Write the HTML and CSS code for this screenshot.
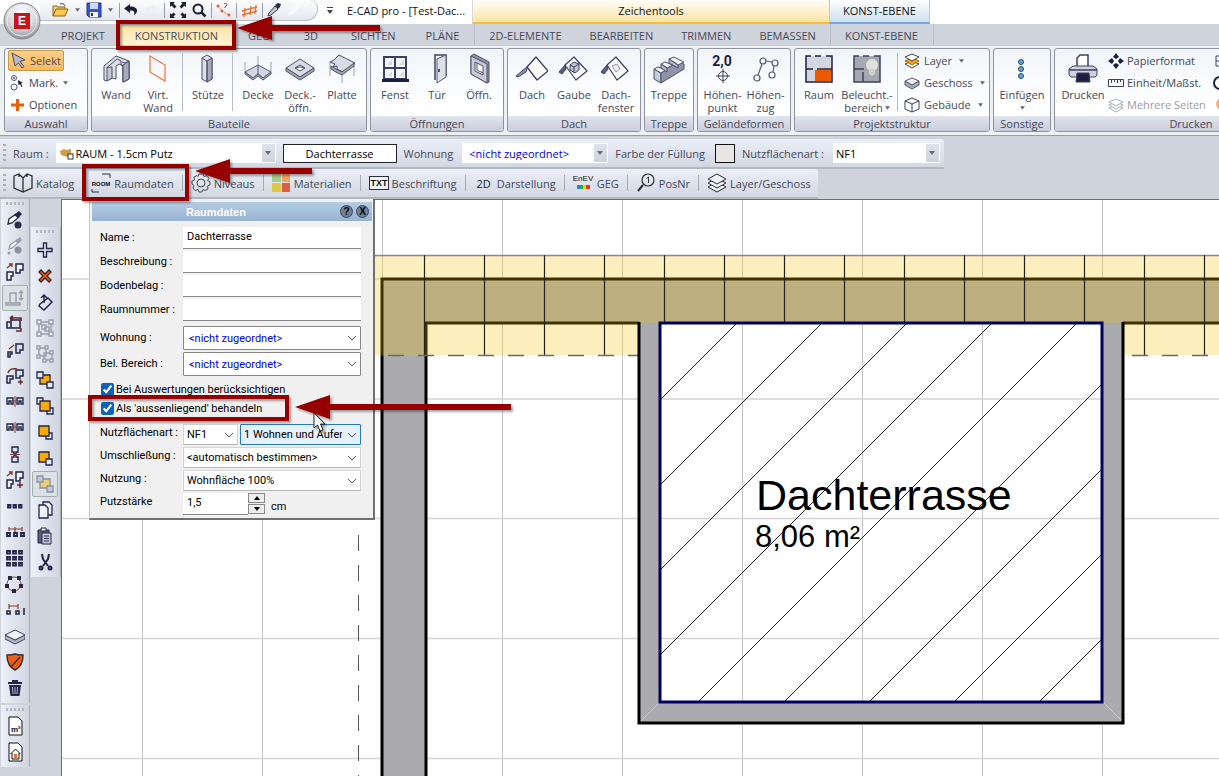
FILE: index.html
```html
<!DOCTYPE html>
<html lang="de">
<head>
<meta charset="utf-8">
<title>E-CAD pro</title>
<link rel="stylesheet" href="styles.css">
</head>
<body>
<svg class="defs" aria-hidden="true">
  <defs>
    <radialGradient id="orb" cx=".5" cy=".3" r=".7"><stop offset="0" stop-color="#fff"/><stop offset=".6" stop-color="#d4d6da"/><stop offset="1" stop-color="#8d9096"/></radialGradient>
    <symbol id="chev" viewBox="0 0 10 6"><path d="M1 1l4 4 4-4" fill="none" stroke="#555"/></symbol>
    <symbol id="tri" viewBox="0 0 6 4"><path d="M0 0h6L3 4z" fill="#666a75"/></symbol>
    <symbol id="pair" viewBox="0 0 20 20"><path d="M2 10h6v4H6v4H2zM11 2h7v6h-3v3h-4z" fill="#f2f4fa" stroke="#23264a" stroke-width="1.5"/><path d="M2 6l5-4M4 2h3v3" stroke="#8a3a2a" fill="none" stroke-width="1.3"/></symbol>
    <symbol id="mirror" viewBox="0 0 20 20"><path d="M2 6h6v6H6v-3H4v3H2zM12 6h6v6h-2v-3h-2v3h-2z" fill="none" stroke="#23264a" stroke-width="1.4"/><path d="M10 4v11M8 9h4" stroke="#8a3a2a"/></symbol>
  </defs>
</svg>

<header class="titlebar">
  <button class="orb" aria-label="Anwendungsmenü">
    <svg width="42" height="42" viewBox="0 0 42 42"><circle cx="21" cy="21" r="18" fill="url(#orb)" stroke="#83868c"/><circle cx="21" cy="21" r="15" fill="none" stroke="#fff" opacity=".7"/><rect x="13" y="13" width="16" height="16" fill="#c4161c"/><text x="21" y="25" class="orb-e" text-anchor="middle">E</text></svg>
  </button>
  <div class="quick">
    <button aria-label="Öffnen"><svg width="18" height="16" viewBox="0 0 18 16"><path d="M2 14V4h4l1 1h7v2" fill="#f6d27a" stroke="#8a6414"/><path d="M2 14l3-7h12l-3 7z" fill="#fbc94e" stroke="#8a6414"/><path d="M9 2c3-1 4 0 5 2" stroke="#444" fill="none"/></svg></button>
    <button class="mini" aria-label="Mehr"><svg width="5" height="4"><use href="#tri"/></svg></button>
    <button aria-label="Speichern"><svg width="16" height="16" viewBox="0 0 16 16"><path d="M1 1h14v14H3l-2-2z" fill="#3a55c8" stroke="#23357e"/><rect x="4" y="1" width="8" height="6" fill="#cdd9fb"/><rect x="4" y="10" width="8" height="5" fill="#fff"/><rect x="5" y="11" width="2" height="3" fill="#23357e"/></svg></button>
    <button class="mini" aria-label="Mehr"><svg width="5" height="4"><use href="#tri"/></svg></button>
    <i class="qsep"></i>
    <button aria-label="Rückgängig"><svg width="14" height="14" viewBox="0 0 14 14"><path d="M6 1L0 5.500l6 4.500V7.500c4 0 5 1 4 5 5-4 4-9-4-9z" fill="#1c2036"/></svg></button>
    <button class="gap" aria-label="Wiederholen"><svg width="14" height="14" viewBox="0 0 14 14"><path d="M8 1l5 4-5 4V6.500C4 6.500 3 8 4 12 0 8 1 3.500 8 3.500z" fill="#eceef2"/></svg></button>
    <i class="qsep"></i>
    <button aria-label="Vollbild"><svg width="18" height="16" viewBox="0 0 18 16"><path d="M1 5V0h5L4.500 1.500l3 3-2 2-3-3zM17 5V0h-5l1.500 1.500-3 3 2 2 3-3zM1 11v5h5l-1.500-1.500 2-2-2-2-2 2zM17 11v5h-5l1.500-1.500-2-2 2-2 2 2z" fill="#1c2036"/></svg></button>
    <button aria-label="Zoom"><svg width="16" height="16" viewBox="0 0 16 16"><circle cx="7" cy="7" r="4.500" fill="none" stroke="#1c2036" stroke-width="2"/><path d="M10 10l4.500 4.500" stroke="#1c2036" stroke-width="2.500"/></svg></button>
    <i class="qsep"></i>
    <button aria-label="Messen"><svg width="16" height="16" viewBox="0 0 16 16"><path d="M2 4l4 5 7 4" fill="none" stroke="#e8712a" stroke-dasharray="2 1"/><circle cx="2" cy="4" r="1.500" fill="#e8611a"/><circle cx="6" cy="9" r="1.500" fill="#e8611a"/><circle cx="13" cy="13" r="1.500" fill="#e8611a"/><path d="M8 2c3-2 4 1 1 3v1" fill="none" stroke="#555"/></svg></button>
    <i class="qsep"></i>
    <button aria-label="Linien"><svg width="17" height="14" viewBox="0 0 17 14"><path d="M1 8l15-4M1 12l15-4M4 5l-1 9M10 3L9 12M15 2l-1 9" stroke="#e8712a" stroke-width="1.300" fill="none"/></svg></button>
    <i class="qsep"></i>
    <button aria-label="Pipette"><svg width="14" height="14" viewBox="0 0 14 14"><path d="M1 13l1-3 6-7 3 3-7 6z" fill="#c3c6d0" stroke="#3a3d52"/><path d="M8 2l3-2 3 1-1 3-2 2z" fill="#2b2e48"/></svg></button>
    <button class="gap" aria-label="Füllen"><svg width="14" height="14" viewBox="0 0 14 14"><path d="M1 13l2-5 7-7 3 3-7 7z" fill="#f9fafb"/></svg></button>
  </div>
  <button class="mini custom" aria-label="Anpassen"><svg width="6" height="7" viewBox="0 0 6 7"><path d="M0 0h6v1H0zM0 3h6L3 7z" fill="#444"/></svg></button>
  <span class="apptitle">E-CAD pro - [Test-Dac...</span>
  <span class="ctx ctx-draw">Zeichentools</span>
  <span class="ctx ctx-level">KONST-EBENE</span>
</header>

<nav class="tabs">
  <a href="#projekt">PROJEKT</a>
  <a href="#konstruktion" class="active">KONSTRUKTION</a>
  <a href="#geo">GEO</a>
  <a href="#3d" class="roomy">3D</a>
  <a href="#sichten">SICHTEN</a>
  <a href="#plaene">PLÄNE</a>
  <a href="#elemente" class="edge snug">2D-ELEMENTE</a>
  <a href="#bearbeiten" class="snug">BEARBEITEN</a>
  <a href="#trimmen" class="snug">TRIMMEN</a>
  <a href="#bemassen" class="snug">BEMASSEN</a>
  <a href="#ebene" class="edge last">KONST-EBENE</a>
</nav>

<main class="ribbon">
  <section class="group">
    <div class="body list select-list">
      <button class="small on"><svg width="18" height="18" viewBox="0 0 18 18"><path d="M2 1l13 7-5 1.500 4 5-2 1.500-3.500-5L5 14z" fill="#b7bac6" stroke="#4a4d60"/></svg>Selekt</button>
      <button class="small"><svg width="18" height="18" viewBox="0 0 18 18" fill="none" stroke="#555870"><circle cx="5" cy="4" r="2.500"/><circle cx="5" cy="4" r=".7"/><circle cx="5" cy="13" r="3"/><path d="M9 6l5 3-2 .5 1.500 3-1 .5-1.500-3-1.500 1.500z" fill="#1c2036" stroke="none"/></svg>Mark.<svg class="dd" width="5" height="4"><use href="#tri"/></svg></button>
      <button class="small"><svg width="18" height="18" viewBox="0 0 18 18"><path d="M7 3h3v4.500h5v3h-5V15H7v-4.500H2v-3h5z" fill="#e8600a"/></svg>Optionen</button>
    </div>
    <h2>Auswahl</h2>
  </section>

  <section class="group">
    <div class="body">
      <button class="big"><svg width="32" height="32" viewBox="0 0 32 32" stroke="#4b5068" stroke-linejoin="round"><path d="M4 13L16 3l13 5v18l-6 3V13l-4-2-3 2v13l-4-1-6 3-2-1z" fill="#dde0e8"/><path d="M7 14.500L17 6l4 2v3l2 2v16l6-3V8l-4 2-3-1" fill="none"/><path d="M12 14v11l-5 3V14.500z" fill="#c3c7d2"/><path d="M23 12l6-4v18l-6 3z" fill="#a7abbb"/></svg><span>Wand</span></button>
      <button class="big"><svg width="32" height="32" viewBox="0 0 32 32"><path d="M8 3l15 9v16L8 19z" fill="none" stroke="#f07a45" stroke-width="1.300"/></svg><span>Virt.<br>Wand</span></button>
      <i class="vsep"></i>
      <button class="big"><svg width="32" height="32" viewBox="0 0 32 32" stroke="#4b5068"><path d="M10 5l5-3 5 3v21l-5 3-5-3z" fill="#dde0e8"/><path d="M15 8l5-3v21l-5 3z" fill="#a7abbb"/><path d="M10 5l5 3v20" fill="none"/></svg><span>Stütze</span></button>
      <i class="vsep"></i>
      <button class="big"><svg width="32" height="32" viewBox="0 0 32 32" stroke="#555a72"><path d="M3 9v10M29 9v10M16 3v10" stroke="#9da2b0"/><path d="M3 19l13-7 13 7-8 6-5-4-5 4z" fill="#d3d7e1"/><path d="M3 19v2l8 6 5-4 5 4 8-6v-2l-8 6-5-4-5 4z" fill="#a7abbb"/><path d="M16 12v9" fill="none"/></svg><span>Decke</span></button>
      <button class="big"><svg width="32" height="32" viewBox="0 0 32 32" stroke="#4b5068"><path d="M2 15L16 6l14 9-14 9z" fill="#d8dbe4"/><path d="M2 15v3l14 9 14-9v-3l-14 9z" fill="#a7abbb"/><path d="M11 15l5-3 5 3-5 3z" fill="#fff"/><path d="M11 15l5-1 5 1" fill="none"/></svg><span>Deck.-<br>öffn.</span></button>
      <button class="big"><svg width="32" height="32" viewBox="0 0 32 32" stroke="#4b5068"><path d="M4 9v14M16 20v10M28 11v12" stroke="#9da2b0"/><path d="M4 9l4-2 5-5 16 8-12 9-6-3v-3l-4 1 2-3z" fill="#d8dbe4"/><path d="M5 13l5 3 6 3 12-9v3l-12 9-6-3-5-3z" fill="#a7abbb"/></svg><span>Platte</span></button>
    </div>
    <h2>Bauteile</h2>
  </section>

  <section class="group">
    <div class="body">
      <button class="big"><svg width="32" height="32" viewBox="0 0 32 32"><rect x="5" y="4" width="22" height="22" fill="#f4f6fa" stroke="#3c4060" stroke-width="2"/><path d="M16 4v22M5 15h22" stroke="#3c4060" stroke-width="2"/><path d="M8 12l5-6v6zM20 12l5-6v6zM8 23l5-5v5zM20 23l5-5v5z" fill="#d3d8e4"/><rect x="3" y="26" width="27" height="3" fill="#1c2040"/></svg><span>Fenst</span></button>
      <button class="big"><svg width="32" height="32" viewBox="0 0 32 32"><path d="M14 27V2h11v21" fill="none" stroke="#3c4060" stroke-width="1.500"/><path d="M16 6l9-4v22l-9 6z" fill="#dde0e8" stroke="#5a5f78"/><path d="M18 16v3" stroke="#1c2040" stroke-width="1.500"/></svg><span>Tür</span></button>
      <button class="big"><svg width="32" height="32" viewBox="0 0 32 32" stroke="#4b5068"><path d="M8 3l3-2 15 8v20l-2 1-16-9z" fill="#8f94a8"/><path d="M8 3l16 8v19L8 21z" fill="#c6cad5"/><path d="M12 9l8 4v9l-8-4z" fill="#fff"/><path d="M14 10v7l6 3" fill="none"/></svg><span>Öffn.</span></button>
    </div>
    <h2>Öffnungen</h2>
  </section>

  <section class="group">
    <div class="body">
      <button class="big"><svg width="32" height="32" viewBox="0 0 32 32" stroke="#3c4060" stroke-linejoin="round"><path d="M0 23L12 13l-2 6-8 5z" fill="#8f94a8"/><path d="M11 14l9-10 12 14-11 9z" fill="#fcfcfd" stroke-width="1.300"/></svg><span>Dach</span></button>
      <button class="big"><svg width="32" height="32" viewBox="0 0 32 32" stroke="#3c4060" stroke-linejoin="round"><path d="M1 19l6-7 1 4-4 5z" fill="#5c6078"/><path d="M7 12l9-8 13 14-11 9z" fill="#fcfcfd" stroke-width="1.200"/><path d="M12 12l4-3 5 2v6l-4 3-5-3z" fill="#c3c7d2"/><path d="M12 12l4 2 5-3M16 14v6" fill="none"/></svg><span>Gaube</span></button>
      <button class="big"><svg width="32" height="32" viewBox="0 0 32 32" stroke="#3c4060" stroke-linejoin="round"><path d="M1 19l6-7 1 4-4 5z" fill="#5c6078"/><path d="M7 12l9-8 12 14-11 9z" fill="#fcfcfd" stroke-width="1.200"/><path d="M12 13l5-2 3 5-4 3z" fill="#eceef3" stroke="#8f94a8"/></svg><span>Dach-<br>fenster</span></button>
    </div>
    <h2>Dach</h2>
  </section>

  <section class="group">
    <div class="body">
      <button class="big"><svg width="32" height="32" viewBox="0 0 32 32" stroke="#4b5068" stroke-linejoin="round"><path d="M1 16l7 4v10l-7-4z" fill="#c6cad5"/><path d="M8 20l5-3v-4l7-3V7l11 4v5L8 30z" fill="#8f94a8"/><path d="M1 16l4-2 8 3-5 3zM8 11l4-2 8 3-6 3zM16 6l5-2 10 5-6 3z" fill="#eef0f5"/><path d="M8 11l6 4v4l-6-4zM16 6l9 6v3l-9-5z" fill="#b4b8c6"/></svg><span>Treppe</span></button>
    </div>
    <h2>Treppe</h2>
  </section>

  <section class="group terrain">
    <div class="body">
      <button class="big"><svg width="32" height="32" viewBox="0 0 32 32" fill="none" stroke="#3c4060"><text x="15" y="13" text-anchor="middle" class="level-no">2,0</text><circle cx="16" cy="23" r="4.500"/><path d="M16 16v14M9 23h14"/></svg><span>Höhen-<br>punkt</span></button>
      <button class="big"><svg width="32" height="32" viewBox="0 0 32 32" fill="none" stroke="#555a72" stroke-width="1.200"><circle cx="7" cy="25" r="3"/><circle cx="13" cy="8" r="3"/><circle cx="25" cy="10" r="3"/><circle cx="22" cy="22" r="3"/><path d="M8 22l4-11M16 8l6 1M24 13l-1 6"/></svg><span>Höhen-<br>zug</span></button>
    </div>
    <h2>Geländeformen</h2>
  </section>

  <section class="group">
    <div class="body">
      <button class="big"><svg width="32" height="32" viewBox="0 0 32 32"><path d="M3 3h26v26H3z" fill="#d3d6de"/><path d="M8 3H3v26h26V3h-6M12 3h6M3 16h7M14 16h15" fill="none" stroke="#1c2040" stroke-width="1.500"/><rect x="12" y="17" width="16" height="11" fill="#ea5b00"/></svg><span>Raum</span></button>
      <button class="big wide"><svg width="32" height="32" viewBox="0 0 32 32"><path d="M3 3h26v26H3z" fill="#a6a8b0"/><path d="M8 3H3v26h26V3h-6M12 3h6M3 16h10M12 19v10" fill="none" stroke="#3c4060" stroke-width="1.500"/><circle cx="21" cy="12" r="6" fill="#e0e0dc"/><path d="M18 16h6v5l-3 2-3-2z" fill="#d0d0ce"/></svg><span>Beleucht.-<br>bereich<svg class="dd tight" width="5" height="4"><use href="#tri"/></svg></span></button>
      <i class="vsep"></i>
      <div class="list">
        <button class="small"><svg width="16" height="16" viewBox="0 0 16 16" stroke="#3c4060" fill="#fff"><path d="M1 11l7-3 7 3-7 4z"/><path d="M1 8l7-3 7 3-7 4z" fill="#f7a600" stroke="#a06a00"/><path d="M1 4l7-3 7 3-7 4z"/></svg>Layer<svg class="dd" width="5" height="4"><use href="#tri"/></svg></button>
        <button class="small"><svg width="16" height="16" viewBox="0 0 16 16" stroke="#555a72"><path d="M1 6v4l7 4 7-4V6l-7 4z" fill="#a7abbb"/><path d="M1 6l7-3 7 3-7 4z" fill="#eef0f5"/></svg>Geschoss<svg class="dd" width="5" height="4"><use href="#tri"/></svg></button>
        <button class="small"><svg width="16" height="16" viewBox="0 0 16 16" stroke="#3c4060" fill="none"><path d="M1 4l7-3 7 3v8l-7 3-7-3zM1 4l7 3 7-3M8 7v8"/></svg>Gebäude<svg class="dd" width="5" height="4"><use href="#tri"/></svg></button>
      </div>
    </div>
    <h2>Projektstruktur</h2>
  </section>

  <section class="group insert">
    <div class="body">
      <button class="big"><svg width="32" height="32" viewBox="0 0 32 32" fill="#5fa5dc" stroke="#2d4a6e"><circle cx="15" cy="9" r="2.500"/><circle cx="15" cy="16" r="2.500"/><circle cx="15" cy="23" r="2.500"/></svg><span>Einfügen<br><svg class="dd tight" width="5" height="4"><use href="#tri"/></svg></span></button>
    </div>
    <h2>Sonstige</h2>
  </section>

  <section class="group print">
    <div class="body">
      <button class="big"><svg width="32" height="32" viewBox="0 0 32 32" stroke="#3c4060"><path d="M10 14V5l3-3h8v12z" fill="#fff" stroke-width="1.500"/><path d="M2 16l4-3h20l4 3v6l-2 2H4l-2-2z" fill="#cfd2dc"/><path d="M2 17h28" stroke-width="1.500"/><path d="M10 20h12l1 9H9z" fill="#1c2040"/></svg><span>Drucken</span></button>
      <div class="list">
        <button class="small"><svg width="16" height="16" viewBox="0 0 16 16" fill="#1c2040"><path d="M8 0l3 4-3 2-3-2zM8 16l3-4-3-2-3 2zM0 8l4-3 2 3-2 3zM16 8l-4-3-2 3 2 3z"/></svg>Papierformat</button>
        <button class="small"><svg width="16" height="16" viewBox="0 0 16 16" fill="none" stroke="#3c4060"><path d="M.5 4.500h15v7H.5zM3.500 5v3M6.500 5v2M9.500 5v3M12.500 5v2"/></svg>Einheit/Maßst.</button>
        <button class="small off" disabled><svg width="16" height="16" viewBox="0 0 16 16" stroke="#a9acb6" fill="#fff"><path d="M1 11l7-3 7 3-7 4z"/><path d="M1 8l7-3 7 3-7 4z"/><path d="M1 5l7-3 7 3-7 4z"/></svg>Mehrere Seiten</button>
      </div>
      <div class="list more">
        <button class="small" aria-label="Ansicht"><svg width="16" height="16" viewBox="0 0 16 16" fill="none" stroke="#3c4060"><path d="M4 3h12v10H4zM4 8h12"/></svg></button>
        <button class="small" aria-label="Einstellungen"><svg width="16" height="16" viewBox="0 0 16 16" fill="none" stroke="#1c2040" stroke-width="2"><circle cx="8" cy="8" r="6"/></svg></button>
        <button class="small off" disabled aria-label="Stopp"><svg width="16" height="16" viewBox="0 0 16 16"><circle cx="10" cy="7" r="6" fill="#f4b08a"/></svg></button>
      </div>
    </div>
    <h2>Drucken</h2>
  </section>
</main>

<div class="bar props">
  <i class="grip"></i>
  <label for="raum">Raum :</label>
  <span class="combo room">
    <svg class="pic" width="14" height="12" viewBox="0 0 14 12"><path d="M0 3l4-2 2 1 5-1v6l-3 2-4-1-3-1z" fill="#d39a45"/><rect x="8" y="6" width="5" height="5" fill="#fff" stroke="#333"/></svg>
    <select id="raum"><option>RAUM - 1.5cm Putz</option></select><svg class="arrow" width="6" height="4"><use href="#tri"/></svg>
  </span>
  <input class="roomname" aria-label="Raumname" value="Dachterrasse">
  <label for="wohnung">Wohnung</label>
  <span class="combo flat"><select id="wohnung" class="blue"><option>&lt;nicht zugeordnet&gt;</option></select><svg class="arrow" width="6" height="4"><use href="#tri"/></svg></span>
  <span>Farbe der Füllung</span>
  <button class="swatch" aria-label="Farbe der Füllung"></button>
  <label for="nfa">Nutzflächenart :</label>
  <span class="combo usage"><select id="nfa"><option>NF1</option></select><svg class="arrow" width="6" height="4"><use href="#tri"/></svg></span>
</div>

<div class="bar tools">
  <i class="grip"></i>
  <button class="cat"><svg width="20" height="20" viewBox="0 0 20 20" fill="none" stroke="#2b2e3c" stroke-width="1.300"><path d="M1 3l5-2 4 4 4-4 5 2v12l-9 4-9-4zM10 5v14M6 1v3M14 1v3"/></svg>Katalog</button>
  <button><svg width="20" height="20" viewBox="0 0 20 20" fill="none" stroke="#2b2e3c"><path d="M11 1h8v4M1 16v3h7"/><text x="10" y="13" text-anchor="middle" class="room-t">ROOM</text></svg>Raumdaten</button>
  <i class="tsep"></i>
  <button><svg width="20" height="20" viewBox="0 0 20 20" fill="none" stroke="#4a4d58"><circle cx="10" cy="10" r="4"/><path d="M8 1h4l1 2.500 3-1 2 3-1.500 2L19 9v3l-2.500 1L17 16l-3 1.500-2-1L11 19H8l-1-2.500-3 1L2 15l1-2.500L1 11V8l2.500-1L3 4l3-1.500 1 1z"/></svg>Niveaus</button>
  <i class="tsep"></i>
  <button><svg width="19" height="18" viewBox="0 0 19 18"><path d="M0 0h9v8H0z" fill="#a6cb8c"/><path d="M10 0h8v8h-8z" fill="#f2a25c"/><path d="M0 9h9v9H0z" fill="#dcc84a"/><path d="M10 9h8v9h-8z" fill="#dc5f45"/></svg>Materialien</button>
  <i class="tsep"></i>
  <button><svg width="20" height="14" viewBox="0 0 20 14"><rect x=".5" y=".5" width="19" height="13" fill="#f1f4fa" stroke="#2b2e48"/><text x="10" y="10" text-anchor="middle" class="txt-t">TXT</text></svg>Beschriftung</button>
  <i class="tsep"></i>
  <button class="two-d"><b>2D</b>Darstellung</button>
  <i class="tsep"></i>
  <button><svg width="21" height="20" viewBox="0 0 21 20"><text x="10" y="8" text-anchor="middle" class="enev-t">EnEV</text><path d="M4 12h3v4H4z" fill="#2a7de0"/><path d="M7 12h3v4H7z" fill="#1fae4a"/><path d="M10 12h3v4h-3z" fill="#f2d21c"/><path d="M13 12h4v4h-4z" fill="#e23a22"/></svg>GEG</button>
  <i class="tsep"></i>
  <button><svg width="20" height="20" viewBox="0 0 20 20" fill="none" stroke="#2b2e3c"><circle cx="12" cy="7" r="6" stroke-width="1.200"/><path d="M7 12l-5 6" stroke-width="2"/><path d="M10.500 5.500L12.500 4v6"/></svg>PosNr</button>
  <i class="tsep"></i>
  <button><svg width="20" height="20" viewBox="0 0 20 20" fill="#eef1f7" stroke="#2b2e3c"><path d="M1 14l9-5 9 5-9 5z"/><path d="M1 10l9-5 9 5-9 5z"/><path d="M1 6l9-5 9 5-9 5z"/></svg>Layer/Geschoss</button>
</div>

<div class="work">
  <div class="side side-a">
    <div class="strip">
      <i class="hgrip"></i>
      <button aria-label="Pipette"><svg viewBox="0 0 20 20"><path d="M3 14l1-5 7-5 3 3-7 6z" fill="#fff" stroke="#2b2e48" stroke-width="1.300"/><path d="M9 5l5-4 3 3-4 4z" fill="#23264a"/><circle cx="13" cy="15" r="3.500" fill="#2b2f4e"/></svg></button>
      <button aria-label="Pipette 2" disabled><svg viewBox="0 0 20 20"><path d="M4 13l1-4 7-5 2 2-7 6z" fill="#fff" stroke="#9a9dab" stroke-width="1.300"/><path d="M10 5l5-4 2 3-4 4z" fill="#9a9dab"/><circle cx="13" cy="14" r="3.500" fill="#8c90a0"/><circle cx="4" cy="17" r="1.500" fill="#9a9dab"/></svg></button>
      <button aria-label="Verschieben"><svg viewBox="0 0 20 20"><use href="#pair"/></svg></button>
      <button class="on" aria-label="Höhe"><svg viewBox="0 0 20 20" fill="none" stroke="#9a9dab" stroke-width="1.400"><path d="M1 15h14v2H1zM5 14V5h6v9"/><path d="M16 3v9M14 5l2-2 2 2M14 10l2 2 2-2"/></svg></button>
      <button aria-label="Drehen"><svg viewBox="0 0 20 20" fill="none" stroke="#23264a" stroke-width="1.600"><path d="M2 8h4v6H2zM6 6h9v8H6z" fill="#dfe3ec"/><path d="M5 4h11v3M5 4l3-2M5 4l3 2M16 14v3h-5" stroke="#6a2a2a"/></svg></button>
      <button aria-label="Kopieren"><svg viewBox="0 0 20 20" fill="none" stroke="#23264a" stroke-width="1.500"><path d="M3 12h4v2H5v3H3zM11 4h7v6h-3v3h-4z"/><path d="M4 9l5-4" stroke="#8a3a2a"/></svg></button>
      <button aria-label="Kopie drehen"><svg viewBox="0 0 20 20"><path d="M2 10h6v3H5v4H2zM11 4h7v6h-3v2h-4z" fill="none" stroke="#23264a" stroke-width="1.500"/><path d="M3 7c1-4 5-5 9-4M13 16h5M15.500 13.500v5" stroke="#6a2a2a" fill="none" stroke-width="1.500"/></svg></button>
      <button aria-label="Spiegeln"><svg viewBox="0 0 20 20"><use href="#mirror"/></svg></button>
      <button aria-label="Spiegeln und kopieren"><svg viewBox="0 0 20 20"><use href="#mirror"/></svg></button>
      <button aria-label="Vertikal spiegeln"><svg viewBox="0 0 20 20"><path d="M7 3h6v5h-2v2H9V8H7zM7 18h6v-5h-2v-2H9v2H7z" fill="none" stroke="#23264a" stroke-width="1.400"/><path d="M5 10.500h10" stroke="#8a3a2a"/></svg></button>
      <button aria-label="Mehrfachkopie"><svg viewBox="0 0 20 20"><use href="#pair"/><path d="M12 15h6M15 12v6" stroke="#6a2a2a" stroke-width="1.500"/></svg></button>
      <button aria-label="Reihe"><svg viewBox="0 0 20 20" fill="none" stroke="#23264a" stroke-width="1.800"><path d="M3 9h2.500v2.500H3zM8.500 9H11v2.500H8.500zM14 9h2.500v2.500H14z"/></svg></button>
      <button aria-label="Verteilen"><svg viewBox="0 0 20 20" fill="none" stroke="#23264a" stroke-width="1.800"><path d="M2 11h3v3H2zM9 11h3v3H9zM16 11h3v3h-3z"/><path d="M4 7h13M4 5v4M10 5v5M17 5v4" stroke="#8a3a2a" stroke-width="1.200"/></svg></button>
      <button aria-label="Raster"><svg viewBox="0 0 20 20" fill="none" stroke="#23264a" stroke-width="1.800"><path d="M2 3h3v2.500H2zM8 3h3v2.500H8zM14 3h3v2.500h-3zM2 9h3v2.500H2zM8 9h3v2.500H8zM14 9h3v2.500h-3zM2 15h3v2.500H2zM8 15h3v2.500H8zM14 15h3v2.500h-3z"/></svg></button>
      <button aria-label="Kreis"><svg viewBox="0 0 20 20"><circle cx="9" cy="10" r="7" fill="none" stroke="#8a4a3a"/><path d="M3 2h4v4H3zM12 2h4v4h-4zM0 10h4v4H0zM14 10h4v4h-4zM7 15h4v4H7z" fill="#23264a"/></svg></button>
      <button aria-label="Abstand"><svg viewBox="0 0 20 20" fill="none" stroke="#23264a" stroke-width="1.600"><path d="M2 11h3v3H2zM11 11h3v3h-3zM19 8v7"/><path d="M4 6h9M4 4v5M13 4v5" stroke="#8a3a2a" stroke-width="1.200"/></svg></button>
      <button aria-label="Geschoss"><svg viewBox="0 0 20 20" stroke="#3c4060"><path d="M0 9v4l10 5 10-5V9l-10 5z" fill="#b3b7c4"/><path d="M0 9l10-5 10 5-10 5z" fill="#f2f3f7"/></svg></button>
      <button aria-label="Schutz"><svg viewBox="0 0 20 20"><path d="M10 2c3 1 5 1 8 1 0 7-2 12-8 15-6-3-8-8-8-15 3 0 5 0 8-1z" fill="#ef5f10" stroke="#3a2d38" stroke-width="1.500"/><path d="M6 15l9-10" stroke="#3a2d38" stroke-width="1.500"/></svg></button>
      <button aria-label="Löschen"><svg viewBox="0 0 20 20"><path d="M3 4h14v2H3zM7 2h6v2H7zM4 7h12l-1.500 11h-9z" fill="#23264a"/><path d="M7.500 9l.5 7M12.500 9l-.5 7M10 9v7" stroke="#aeb3c4"/></svg></button>
    </div>
    <div class="strip">
      <i class="hgrip"></i>
      <button aria-label="Fläche"><svg viewBox="0 0 20 20"><path d="M4 1h9l4 4v14H4z" fill="#fff" stroke="#111"/><text x="6" y="16" class="m2">m²</text></svg></button>
      <button aria-label="Gebäude"><svg viewBox="0 0 20 20"><path d="M4 1h9l4 4v14H4z" fill="#fff" stroke="#111"/><path d="M5.500 12L10.500 7l5 5M7 11v6h7v-6" fill="none" stroke="#111"/><path d="M9 12h3v4H9z" fill="#e8712a"/></svg></button>
    </div>
  </div>
  <div class="side side-b">
    <div class="strip">
      <i class="hgrip"></i>
      <button aria-label="Neu"><svg viewBox="0 0 20 20"><path d="M8.500 3h3v5.500H17v3h-5.500V17h-3v-5.500H3v-3h5.500z" fill="#e6eaf2" stroke="#23264a" stroke-width="1.400"/></svg></button>
      <button aria-label="Entfernen"><svg viewBox="0 0 20 20"><path d="M4 6l2-2 4 4 4-4 2 2-4 4 4 4-2 2-4-4-4 4-2-2 4-4z" fill="#ef5f10" stroke="#3a2020" stroke-width="1.300"/></svg></button>
      <button aria-label="Ändern"><svg viewBox="0 0 20 20" fill="none" stroke="#23264a" stroke-width="1.500"><path d="M5 12l8-6 4 4-8 8-5-4zM9 11V3M6 6l3-3 3 3"/></svg></button>
      <button aria-label="Gruppieren" disabled><svg viewBox="0 0 20 20" fill="none" stroke="#9a9dab" stroke-width="1.400"><path d="M4 4h12v12H4z"/><path d="M2 2h4v4H2zM14 2h4v4h-4zM2 14h4v4H2zM14 14h4v4h-4zM7 7h4v4H7zM10 9h4v4h-4z" fill="#eceff6"/></svg></button>
      <button aria-label="Gruppe lösen" disabled><svg viewBox="0 0 20 20" fill="none" stroke="#9a9dab" stroke-width="1.400"><path d="M4 4h7v8H4zM9 9h8v7H9z"/><path d="M2 2h3v3H2zM10 2h3v3h-3zM2 11h3v3H2zM15 7h3v3h-3zM8 15h3v3H8zM15 15h3v3h-3z" fill="#eceff6"/></svg></button>
      <button aria-label="Vordergrund"><svg viewBox="0 0 20 20" stroke="#23264a" stroke-width="1.300" fill="#e4e8f2"><path d="M5 5h10v9H5z" fill="#f9ab00"/><path d="M2 2h6v6H2zM12 12h6v6h-6z"/></svg></button>
      <button aria-label="Ganz nach vorn"><svg viewBox="0 0 20 20" stroke="#23264a" stroke-width="1.300" fill="#e4e8f2"><path d="M2 2h6v6H2zM12 12h6v6h-6z"/><path d="M5 5h10v10H5z" fill="#f9ab00"/></svg></button>
      <button aria-label="Nach vorn"><svg viewBox="0 0 20 20" stroke="#23264a" stroke-width="1.300" fill="#e4e8f2"><path d="M11 11h6v6h-6z"/><path d="M4 4h10v10H4z" fill="#f9ab00"/></svg></button>
      <button aria-label="Nach hinten"><svg viewBox="0 0 20 20" stroke="#23264a" stroke-width="1.300" fill="#e4e8f2"><path d="M4 4h10v10H4z" fill="#f9ab00"/><path d="M11 11h6v6h-6z"/></svg></button>
      <button class="on" aria-label="Reihenfolge"><svg viewBox="0 0 20 20" stroke="#8d92a4" stroke-width="1.300" fill="#c5cad6"><path d="M5 5h10v9H5z" fill="#eecb78"/><path d="M2 2h6v6H2zM12 12h6v6h-6z"/></svg></button>
      <button aria-label="Kopieren"><svg viewBox="0 0 20 20" stroke="#23264a" stroke-width="1.300" fill="#eef1f8"><path d="M8 2h6l3 3v10H8z"/><path d="M4 5h6l3 3v10H4z"/></svg></button>
      <button aria-label="Einfügen"><svg viewBox="0 0 20 20"><path d="M3 4h11v13H3z" fill="#5a5f78" stroke="#23264a"/><path d="M6 2h5v3H6z" fill="#eee" stroke="#23264a"/><path d="M7 7h9v11H7z" fill="#c5cad6" stroke="#23264a"/><path d="M9 10h5M9 12.500h5M9 15h5" stroke="#23264a"/></svg></button>
      <button aria-label="Ausschneiden"><svg viewBox="0 0 20 20" fill="none" stroke="#23264a" stroke-width="2"><path d="M7 2l1 5 5 7M14 2l-1 5-5 7"/><circle cx="6" cy="16" r="1.500"/><circle cx="15" cy="16" r="1.500"/></svg></button>
    </div>
  </div>

  <div class="canvas">
    <svg class="plan" width="100%" height="100%">
      <defs>
        <clipPath id="terrace"><rect x="661" y="323" width="441" height="379"/></clipPath>
      </defs>
      <g transform="translate(-62 -200)">
        <path class="grid-v" d="M142.500 200v1400M262.500 200v1400M382.500 200v1400M502.500 200v1400M622.500 200v1400M742.500 200v1400M862.500 200v1400M982.500 200v1400M1102.500 200v1400"/>
        <path class="grid-h" d="M62 279h3000M62 399h3000M62 518.500h3000M62 638.500h3000M62 758.500h3000"/>
        <path d="M382 355H427V2000H382z" fill="#abaaaf"/>
        <path d="M382 2000V355M426 2000V355" class="wall"/>
        <path d="M375 255H3000V355.500H1124V323H639V355.500H375z" fill="#f6cd3a" fill-opacity=".33"/>
        <path d="M382 279H3000v44H427v32H382z" fill="#bcb080"/>
        <path d="M382 355V279H3000M426 355V323H639M1123 323H3000" fill="none" stroke="#3f3300" stroke-width="3"/>
        <path d="M375 255.500H3000" stroke="#8f8a78" stroke-width="1.500"/>
        <path d="M424.500 255v100M484.500 255v100M544.500 255v100M604.500 255v100M664.500 255v67M724.500 255v67M784.500 255v67M844.500 255v67M904.500 255v67M964.500 255v67M1024.500 255v67M1084.500 255v67M1144.500 255v100M1204.500 255v100" stroke="#26231a" stroke-width="1.200"/>
        <path d="M388 355.500H638M1132 355.500H3000" stroke="#6a6a66" stroke-dasharray="16 14" stroke-width="1.300"/>
        <path d="M358.500 535V2000" stroke="#555" stroke-dasharray="16 14"/>
        <path d="M639 323H660V702H1102V323H1124V723H639z" fill="#abaaaf"/>
        <path d="M640 722l20-20M1123 722l-20-20" stroke="#c9c9cc"/>
        <path d="M639 322V723H1123V322" class="wall"/>
        <g clip-path="url(#terrace)">
          <path class="hatch" d="M660 400l100-100M660 485l200-200M660 570l300-300M660 655l400-400M660 740l500-500M660 826l500-500M660 911l500-500M660 996l500-500M660 1081l500-500"/>
        </g>
        <rect x="660" y="323" width="442" height="379" fill="none" stroke="#00005f" stroke-width="3"/>
        <text x="756" y="510" class="room-name">Dachterrasse</text>
        <text x="755" y="547" class="room-area">8,06 m²</text>
      </g>
    </svg>
  </div>

  <form class="dialog">
    <div class="dlg-title">
      <strong>Raumdaten</strong>
      <button type="button" aria-label="Hilfe">?</button>
      <button type="button" aria-label="Schließen">X</button>
    </div>
    <div class="dlg-body">
      <div class="row"><label for="d1">Name :</label><input id="d1" value="Dachterrasse"></div>
      <div class="row"><label for="d2">Beschreibung :</label><input id="d2"></div>
      <div class="row"><label for="d3">Bodenbelag :</label><input id="d3"></div>
      <div class="row"><label for="d4">Raumnummer :</label><input id="d4"></div>
      <div class="row tall first"><label for="d5">Wohnung :</label><span class="pick framed"><select id="d5" class="blue"><option>&lt;nicht zugeordnet&gt;</option></select><svg width="10" height="6"><use href="#chev"/></svg></span></div>
      <div class="row tall"><label for="d6">Bel. Bereich :</label><span class="pick framed"><select id="d6" class="blue"><option>&lt;nicht zugeordnet&gt;</option></select><svg width="10" height="6"><use href="#chev"/></svg></span></div>
      <div class="checks">
        <label><input type="checkbox" checked>Bei Auswertungen berücksichtigen</label>
        <label><input type="checkbox" checked>Als 'aussenliegend' behandeln</label>
      </div>
      <div class="row low"><label for="d7">Nutzflächenart :</label><span class="pick short"><select id="d7"><option>NF1</option></select><svg width="10" height="6"><use href="#chev"/></svg></span><span class="pick hot"><select aria-label="Nutzung nach Norm"><option>1 Wohnen und Aufenthalt</option></select><svg width="10" height="6"><use href="#chev"/></svg></span></div>
      <div class="row low"><label for="d8">Umschließung :</label><span class="pick"><select id="d8"><option>&lt;automatisch bestimmen&gt;</option></select><svg width="10" height="6"><use href="#chev"/></svg></span></div>
      <div class="row low"><label for="d9">Nutzung :</label><span class="pick"><select id="d9"><option>Wohnfläche 100%</option></select><svg width="10" height="6"><use href="#chev"/></svg></span></div>
      <div class="row low last"><label for="d10">Putzstärke</label><input id="d10" class="num" value="1,5"><span class="spin"><button type="button" aria-label="Mehr"><svg width="6" height="4" viewBox="0 0 6 4"><path d="M0 4h6L3 0z"/></svg></button><button type="button" aria-label="Weniger"><svg width="6" height="4" viewBox="0 0 6 4"><path d="M0 0h6L3 4z"/></svg></button></span><span class="unit">cm</span></div>
    </div>
  </form>
</div>

<svg class="marks" width="520" height="440" aria-hidden="true">
  <g fill="none" stroke="#970000" stroke-width="4"><rect x="118" y="22" width="116" height="26"/><rect x="84" y="166" width="103" height="33"/><rect x="90" y="397" width="197" height="22"/></g>
  <g fill="#970000">
    <path d="M237 28l35-12v9h108v6H272v9z"/>
    <path d="M195 171l35-12v9h82v6h-82v9z"/>
    <path d="M295 407l35-12v9h181v6H330v9z"/>
  </g>
  <path d="M314 413v15l3.500-3 2.500 6 3-1-2.500-6h4.500z" fill="#fff" stroke="#222"/>
</svg>
</body>
</html>
```
FILE: styles.css
```css
* { box-sizing: border-box; }
body {
  margin: 0;
  height: 100vh;
  display: flex;
  flex-direction: column;
  overflow: hidden;
  position: relative;
  background: #cfd3dc;
  color: #45485a;
  font: 11px/13px "Open Sans", "Noto Sans", sans-serif;
}
button, input, select { font: inherit; color: inherit; }
button { border: 0; padding: 0; margin: 0; background: none; }
svg { flex: none; display: block; }
i { flex: none; display: block; }
.defs { position: absolute; width: 0; height: 0; }

.titlebar { display: flex; flex: none; height: 24px; background: #fff; }
.orb { position: absolute; left: 1px; top: 0; z-index: 2; }
.orb-e { font: bold 12px "Liberation Sans", sans-serif; fill: #fff; }
.quick {
  display: flex;
  flex: none;
  align-items: center;
  gap: 4px;
  width: 278px;
  height: 21px;
  margin-left: 40px;
  padding-left: 11px;
  border: 1px solid #b9bdc6;
  border-width: 0 1px 1px 0;
  border-radius: 0 8px 12px 0;
  background: linear-gradient(#fdfdfe, #e4e7ee);
}
.mini { display: flex; align-items: center; padding: 0 2px; }
.gap { margin: 0 2px; }
.qsep { width: 1px; height: 15px; background: #9a9ea9; }
.custom { margin: 0 12px 4px 7px; }
.apptitle { flex: 0 0 125px; margin-top: 4px; color: #111; white-space: nowrap; }
.ctx { display: flex; justify-content: center; padding-top: 4px; color: #111; }
.ctx-draw { flex: 0 0 357px; border-left: 1px solid #d8d8d8; border-bottom: 2px solid #f6bd3c; background: linear-gradient(#fffdf8, #fae4a4); }
.ctx-level { flex: 0 0 101px; border: 1px solid #b4c6dc; border-width: 0 1px 2px; border-bottom-color: #74a5dd; background: linear-gradient(#fff, #cfdff0); }

.tabs { display: flex; flex: none; height: 22px; padding-left: 46px; border-bottom: 1px solid #bcd4dc; background: #cfd3dc; }
.tabs a { flex: none; padding: 5px 15px 0; color: #45485a; text-decoration: none; }
.tabs .roomy { padding: 5px 18px 0; }
.tabs .snug { padding: 5px 14px 0; }
.tabs .active { border-radius: 3px 3px 0 0; background: linear-gradient(#fbe3a6, #fdf3d2); margin-top: 1px; padding-top: 4px; }
.tabs .edge { border-left: 1px solid #b8bdc8; padding-left: 14px; }
.tabs .last { border-right: 1px solid #b8bdc8; }

.ribbon { display: flex; flex: none; gap: 3px; height: 90px; padding: 2px 0 3px 4px; background: #eef1f4; border-bottom: 1px solid #9a9da6; overflow: hidden; }
.group { display: flex; flex: none; flex-direction: column; border: 1px solid #8f939e; border-radius: 3px; background: linear-gradient(#f1f5f8, #fff 70%); }
.body { display: flex; flex: 1; padding: 4px 3px 0; }
.group h2 { margin: 0; height: 15px; padding-top: 1px; text-align: center; font: inherit; background: linear-gradient(#e0e4ee, #c9cedb); border-radius: 0 0 2px 2px; }
.big { display: flex; flex-direction: column; align-items: center; gap: 3px; width: 42px; white-space: nowrap; }
.big span { display: block; }
.big.wide { width: 54px; }
.terrain .big { width: 43px; }
.insert .big { width: 50px; }
.print { flex: 1 0 274px; }
.print .big { width: 50px; }
.vsep { width: 1px; height: 58px; margin: 0 4px 0 3px; background: #b9bdc8; }
.list { display: flex; flex-direction: column; align-items: flex-start; gap: 1px; }
.small { display: flex; align-items: center; gap: 4px; height: 21px; white-space: nowrap; }
.body > .list { margin-top: -3px; }
.select-list { width: 82px; padding: 1px 3px 0; }
.select-list .small { gap: 2px; padding: 0 2px 0 1px; }
.small.on { border: 1px solid #c49a4a; border-radius: 2px; background: linear-gradient(#fbd08a, #f9b95c); }
.print .list { width: 104px; }
.print .small { gap: 3px; }
.ribbon .wide + .vsep + .list { width: 84px; padding-left: 2px; }
.off { color: #9a9da8; }
.dd { display: inline-block; margin-left: 3px; }
.dd.tight { margin-left: 2px; vertical-align: 2px; }

.bar { display: flex; flex: none; align-items: center; align-self: flex-start; background: linear-gradient(#eaeff8, #d2d7e2); border-bottom: 2px solid #b3b7c0; border-radius: 0 3px 0 0; white-space: nowrap; }
.grip { width: 3px; height: 18px; margin: 0 7px 0 3px; background: repeating-linear-gradient(#a9aebb 0 2px, transparent 2px 5px); }
.props { height: 30px; margin-top: 3px; padding-right: 4px; gap: 7px; }
.props .grip { margin-right: 0; }
.combo { position: relative; display: flex; height: 20px; }
.combo select { width: 100%; appearance: none; border: 0; border-radius: 0; padding: 0 18px 0 3px; background: linear-gradient(#dfe3ec, #cdd2dd) right 1px center / 13px 18px no-repeat #fff; color: #000; }
.combo .arrow { position: absolute; right: 5px; top: 8px; }
.combo .pic { position: absolute; left: 4px; top: 5px; }
.room { width: 220px; }
.room select { padding-left: 20px; }
.flat { width: 146px; margin-left: 2px; }
.flat select { padding-left: 7px; }
.usage { width: 107px; margin-left: 2px; }
.combo .blue, .pick .blue { color: #0000f0; }
.roomname { width: 114px; height: 19px; border: 1px solid #222; background: #fff; color: #000; text-align: center; padding: 0; }
.swatch { width: 20px; height: 19px; margin-left: 3px; border: 1px solid #111; background: #e8e6e5; }
.tools { height: 30px; padding-right: 7px; }
.tools button { display: flex; align-items: center; gap: 3px; }
.tools .cat { margin-right: 17px; }
.tools .two-d { gap: 6px; padding-left: 3px; }
.tools b { font-weight: normal; color: #1b1d28; }
.tsep { width: 1px; height: 16px; margin: 0 8px; background: #a7abb6; }
.room-t { font: bold 6px "Liberation Sans", sans-serif; fill: #111; stroke: none; }
.txt-t { font: bold 9px "Liberation Sans", sans-serif; fill: #111; }
.enev-t { font: 8px "Liberation Sans", sans-serif; fill: #111; }
.level-no { font: bold 14px Roboto, sans-serif; fill: #1c2040; stroke: none; }
.m2 { font: bold 8px "Liberation Sans", sans-serif; fill: #111; }

.work { position: relative; display: flex; flex: 1; min-height: 0; }
.side { flex: none; padding-left: 1px; }
.side-b { padding-top: 28px; }
.strip { border-right: 1px solid #a9adb8; background: linear-gradient(90deg, #eaeff8, #d0d5e0); margin-bottom: 2px; padding: 0 0 2px 1px; }
.side-a .strip { width: 29px; }
.side-b .strip { width: 30px; }
.strip button { display: flex; align-items: center; justify-content: center; width: 26px; height: 26px; }
.strip svg { width: 20px; height: 20px; }
.strip .on { border: 1px solid #a3b0ac; border-radius: 2px; background: #dbe2e4; }
.hgrip { width: 18px; height: 7px; margin-left: 4px; background: repeating-linear-gradient(90deg, #b2b6c2 0 2px, transparent 2px 4px) 0 3px / 18px 3px no-repeat; }
.side-a .hgrip { margin-bottom: 1px; }
.side-b .hgrip { margin-bottom: 3px; }

.canvas { flex: 1; min-width: 0; overflow: hidden; background: #fff; border: solid #6e6e70; border-width: 1px 0 0 1px; }
.plan { font-family: "Liberation Sans", Arial, sans-serif; }
.grid-v { stroke: #c6c6c6; fill: none; }
.grid-h { stroke: #d4d4d4; fill: none; stroke-width: 1.500; }
.wall { fill: none; stroke: #000; stroke-width: 3; }
.hatch { stroke: #222; fill: none; }
.room-name { font-size: 43px; fill: #000; }
.room-area { font-size: 31px; fill: #000; }

.dialog { position: absolute; left: 89px; top: 0; width: 286px; padding: 3px 1px 3px 2px; background: #f0f0f0; border: solid #707070; border-width: 0 2px 2px 1px; border-left-color: #c8c8c8; color: #000; font-family: Roboto, "Noto Sans", sans-serif; }
.dlg-title { display: flex; align-items: center; gap: 3px; height: 19px; padding: 0 3px; background: linear-gradient(#b4cce5, #98b3d1); }
.dlg-title strong { flex: 1; text-align: center; color: #fff; font: bold 11px "Liberation Sans", sans-serif; }
.dlg-title button { width: 13px; height: 13px; border: 1px solid #38465a; border-radius: 50%; background: #6f8095; color: #000; font: bold 10px/10px "Liberation Sans", sans-serif; }
.dlg-body { padding: 5px 11px 0 8px; }
.row { display: flex; align-items: center; height: 24px; }
.row label { flex: 0 0 83px; padding-bottom: 1px; }
.row input { flex: 1; min-width: 0; height: 22px; border: 0; border-bottom: 1px solid #868686; background: #fff; padding: 0 4px 2px; color: #000; }
.row.tall { height: 26px; }
.row.first { margin-top: 3px; }
.row.low { height: 23px; }
.row.low label { padding-bottom: 4px; }
.pick { position: relative; flex: 1; display: flex; height: 21px; }
.pick select { width: 100%; appearance: none; border: 1px solid #d4d4d4; border-bottom-color: #b5b5b5; border-radius: 1px; background: #fff; color: #000; padding: 0 18px 0 3px; text-overflow: clip; }
.pick svg { position: absolute; right: 4px; top: 8px; }
.pick.framed { height: 24px; }
.framed select { border-color: #868686; padding-left: 5px; }
.framed svg { top: 9px; }
.pick.short { flex: 0 0 55px; margin-right: 2px; }
.pick.hot select { border-color: #2878c0; background: #e5f1fb; }
.checks { display: flex; flex-direction: column; margin: 3px 0 5px; }
.checks label { display: flex; align-items: center; gap: 2px; height: 19px; }
.checks input { width: 13px; height: 13px; margin: 0 0 0 1px; accent-color: #0f63b8; }
.row .num { flex: 0 0 65px; }
.spin { display: flex; flex-direction: column; gap: 1px; width: 17px; }
.spin button { display: flex; align-items: center; justify-content: center; height: 10px; border: 1px solid #888; background: #eee; }
.unit { padding: 5px 0 0 6px; }

.marks { position: absolute; left: 0; top: 0; z-index: 3; pointer-events: none; filter: drop-shadow(2px 2px 1px rgba(0, 0, 0, .35)); }
```
